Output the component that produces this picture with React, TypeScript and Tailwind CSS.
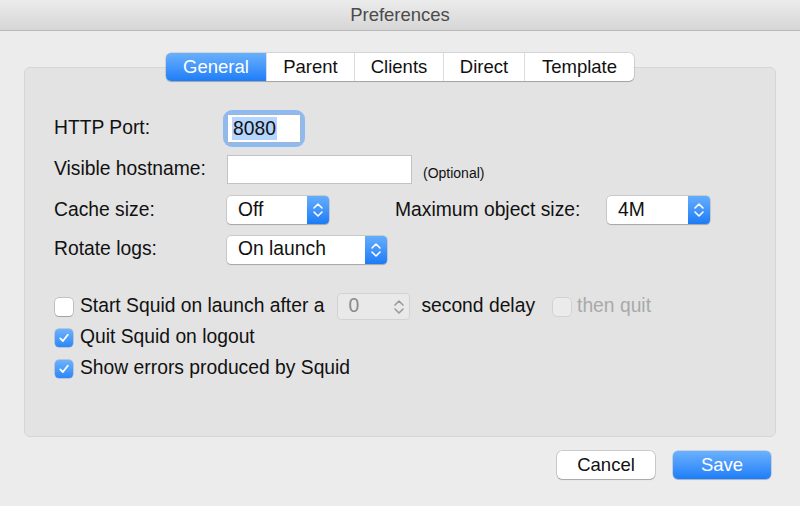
import { FC, ReactNode } from "react";

const font = { fontFamily: '"Liberation Sans", Arial, sans-serif' };

const Arrows: FC<{ color?: string }> = ({ color = "#ffffff" }) => (
  <svg width="12" height="20" viewBox="0 0 12 20" fill="none">
    <path d="M2 8 L6 4 L10 8" stroke={color} strokeWidth="1.6" strokeLinecap="round" strokeLinejoin="round" />
    <path d="M2 12 L6 16 L10 12" stroke={color} strokeWidth="1.6" strokeLinecap="round" strokeLinejoin="round" />
  </svg>
);

const Popup: FC<{ value: string; width: string }> = ({ value, width }) => (
  <div
    className={`flex h-[28px] ${width} rounded-[4px] bg-white shadow-[0_0_0_0.5px_rgba(0,0,0,0.22),0_1px_1px_rgba(0,0,0,0.18)]`}
  >
    <div className="flex flex-1 items-center pl-[11px] text-[19.3px] text-[#111]">{value}</div>
    <div className="flex w-[22px] items-center justify-center rounded-r-[4px] bg-gradient-to-b from-[#63adfd] to-[#1a7cf6]">
      <Arrows />
    </div>
  </div>
);

const Check: FC<{ checked?: boolean; disabled?: boolean }> = ({ checked, disabled }) =>
  checked ? (
    <div className="flex h-[18px] w-[18px] items-center justify-center rounded-[4px] bg-gradient-to-b from-[#6db2fc] to-[#2a87f7] shadow-[0_0_0_0.5px_rgba(0,60,160,0.35)]">
      <svg width="12" height="12" viewBox="0 0 12 12" fill="none">
        <path d="M2.3 6.4 L4.9 9 L9.8 2.8" stroke="#fff" strokeWidth="1.8" strokeLinecap="round" strokeLinejoin="round" />
      </svg>
    </div>
  ) : (
    <div
      className={`h-[18px] w-[18px] rounded-[4px] ${
        disabled
          ? "bg-[#ebebeb] shadow-[0_0_0_0.5px_rgba(0,0,0,0.15)]"
          : "bg-white shadow-[0_0_0_0.5px_rgba(0,0,0,0.3),0_1px_1px_rgba(0,0,0,0.15)]"
      }`}
    />
  );

const Row: FC<{ label: string; className?: string; children: ReactNode }> = ({ label, className = "", children }) => (
  <div className={`flex items-center ${className}`}>
    <div className="w-[172px] text-[19.3px] text-[#111]">{label}</div>
    {children}
  </div>
);

const tabs = ["General", "Parent", "Clients", "Direct", "Template"];
const tabWidths = ["w-[100px]", "w-[88px]", "w-[89px]", "w-[81px]", "w-[110px]"];

const App: FC = () => {
  return (
    <div className="flex h-[506px] w-[800px] flex-col overflow-hidden bg-[#ececec]" style={font}>
      {/* title bar */}
      <div className="flex h-[31px] items-center justify-center border-b border-[#b9b9b9] bg-gradient-to-b from-[#ececec] to-[#d6d6d6] text-[18.5px] text-[#4b4b4b]">
        Preferences
      </div>

      {/* tabs */}
      <div className="relative z-10 mt-[22px] flex justify-center">
        <div className="flex h-[28px] rounded-[5px] bg-white shadow-[0_0_0_0.5px_rgba(0,0,0,0.2),0_1px_1px_rgba(0,0,0,0.2)]">
          {tabs.map((t, i) => (
            <div
              key={t}
              className={`flex items-center justify-center text-[18.5px] ${tabWidths[i]} ${
                i === 0
                  ? "rounded-l-[5px] bg-gradient-to-b from-[#68b0fd] to-[#1b7df7] text-white"
                  : "border-l border-[#dcdcdc] text-[#111]"
              } ${i === tabs.length - 1 ? "rounded-r-[5px]" : ""}`}
            >
              {t}
            </div>
          ))}
        </div>
      </div>

      {/* group box */}
      <div className="mx-[24px] -mt-[14px] flex h-[370px] flex-col rounded-[6px] border border-[#d6d6d6] bg-[#e3e3e3] pl-[29px]">
        <Row label="HTTP Port:" className="mt-[46px] h-[29px]">
          <div className="ml-[1px] rounded-[5px] shadow-[0_0_0_4px_#8fbaf0]">
            <div className="flex h-[29px] w-[74px] items-center border border-[#9fb5d3] bg-white pl-[4px] text-[19.3px] text-[#111]">
              <span className="bg-[#b4d5fe] px-[1px] leading-[23px]">8080</span>
            </div>
          </div>
        </Row>

        <Row label="Visible hostname:" className="mt-[12px] h-[29px]">
          <div className="ml-[1px] h-[29px] w-[185px] border border-[#c3c3c3] bg-white" />
          <div className="ml-[11px] mt-[7px] text-[14px] text-[#111]">(Optional)</div>
        </Row>

        <Row label="Cache size:" className="mt-[12px] h-[28px]">
          <div className="ml-[1px]">
            <Popup value="Off" width="w-[102px]" />
          </div>
          <div className="ml-[66px] w-[212px] text-[19.3px] text-[#111]">Maximum object size:</div>
          <Popup value="4M" width="w-[103px]" />
        </Row>

        <Row label="Rotate logs:" className="mt-[12px] h-[27px]">
          <div className="ml-[1px]">
            <Popup value="On launch" width="w-[160px]" />
          </div>
        </Row>

        <div className="mt-[30px] flex h-[27px] items-center text-[19.3px]">
          <div className="ml-[1px]">
            <Check />
          </div>
          <div className="ml-[7px] text-[#111]">Start Squid on launch after a</div>
          <div className="ml-[13px] flex h-[27px] w-[73px] items-center justify-between rounded-[4px] border border-[#d3d3d3] bg-[#e9e9e9] pl-[10px] pr-[4px] text-[#8a8a8a]">
            <span>0</span>
            <Arrows color="#9a9a9a" />
          </div>
          <div className="ml-[11px] text-[#111]">second delay</div>
          <div className="ml-[18px]">
            <Check disabled />
          </div>
          <div className="ml-[6px] text-[#a9a9a9]">then quit</div>
        </div>

        <div className="mt-[4px] flex h-[27px] items-center text-[19.3px]">
          <div className="ml-[1px]">
            <Check checked />
          </div>
          <div className="ml-[7px] text-[#111]">Quit Squid on logout</div>
        </div>

        <div className="mt-[4px] flex h-[27px] items-center text-[19.3px]">
          <div className="ml-[1px]">
            <Check checked />
          </div>
          <div className="ml-[7px] text-[#111]">Show errors produced by Squid</div>
        </div>
      </div>

      {/* buttons */}
      <div className="mt-[14px] flex justify-end gap-[18px] pr-[29px]">
        <button className="flex h-[28px] w-[98px] items-center justify-center rounded-[5px] bg-white text-[18.5px] text-[#111] shadow-[0_0_0_0.5px_rgba(0,0,0,0.28),0_1px_1px_rgba(0,0,0,0.18)]">
          Cancel
        </button>
        <button className="flex h-[28px] w-[98px] items-center justify-center rounded-[5px] bg-gradient-to-b from-[#6ab1fd] to-[#1b7df7] text-[18.5px] text-white shadow-[0_0_0_0.5px_rgba(0,60,160,0.3),0_1px_1px_rgba(0,0,0,0.15)]">
          Save
        </button>
      </div>
    </div>
  );
};

export default App;
